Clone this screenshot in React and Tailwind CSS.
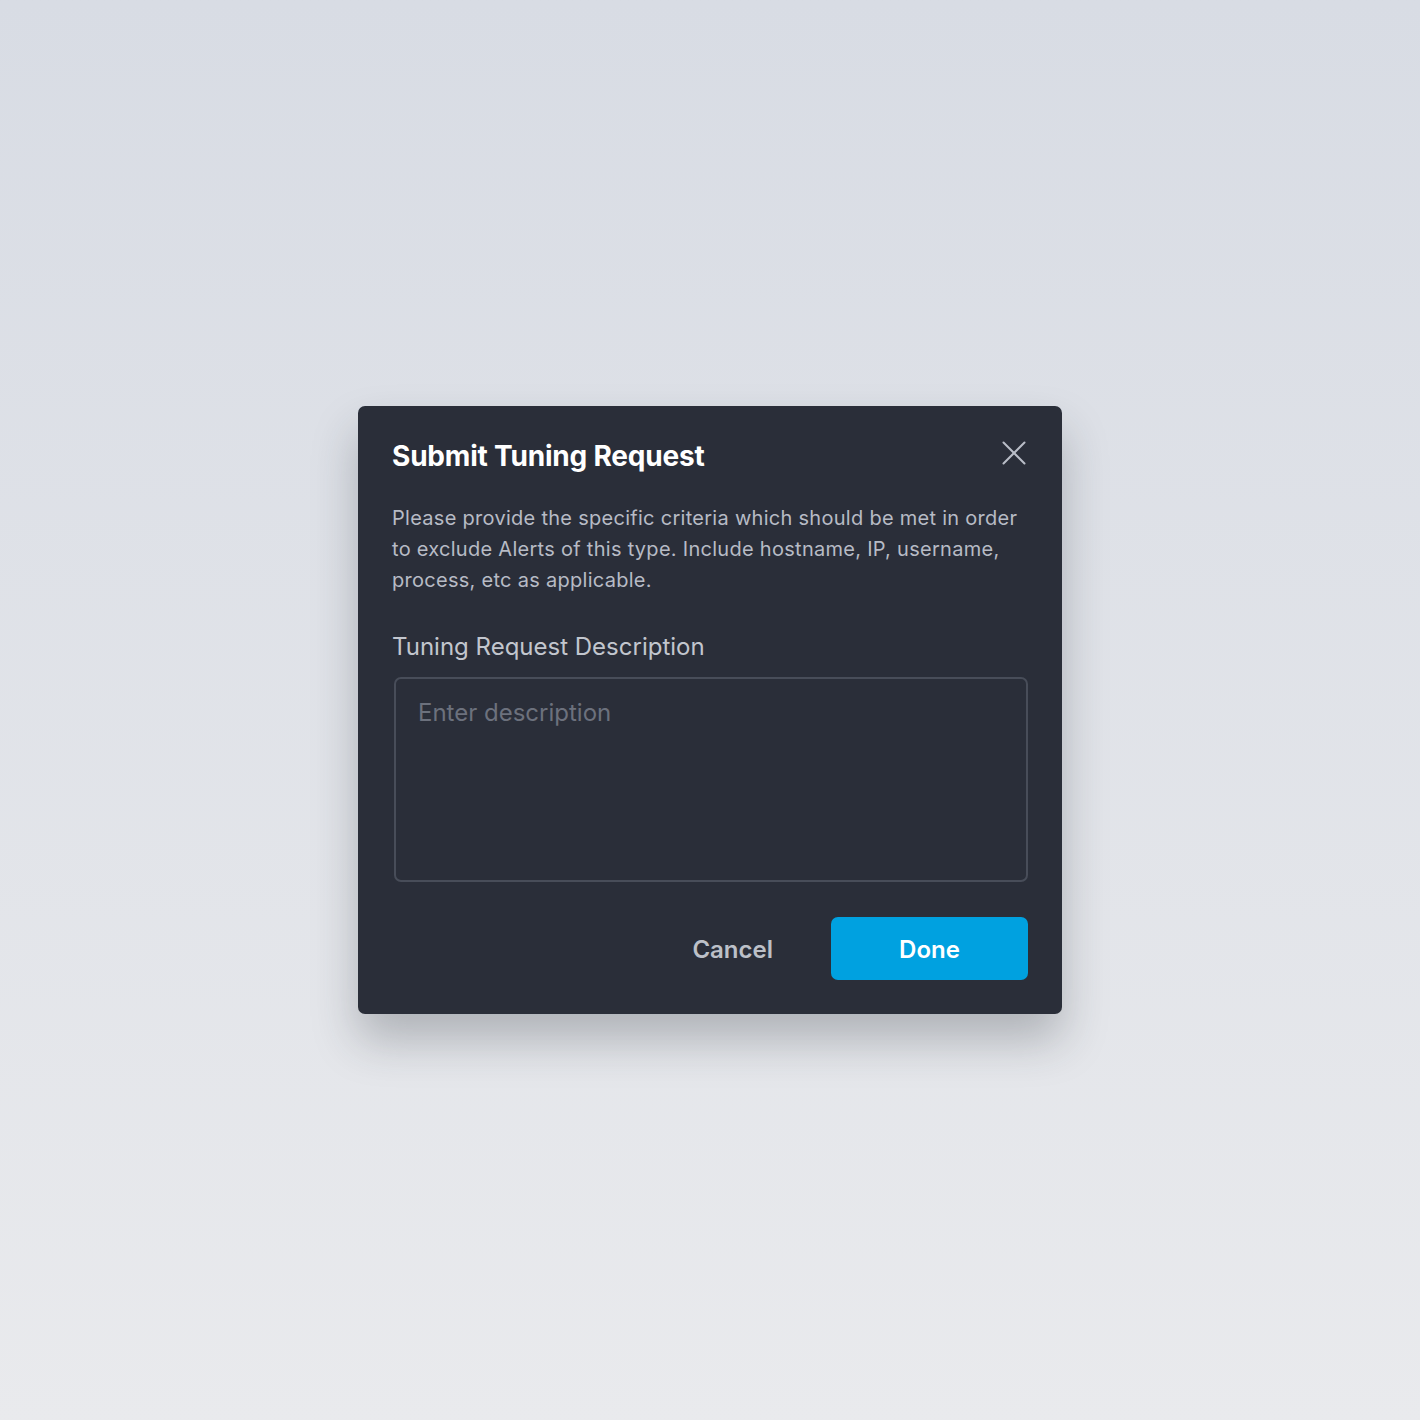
import React from 'react';

// ── Close icon ────────────────────────────────────────────────────────────────
const CloseIcon = () => (
  <svg width="24" height="24" viewBox="0 0 24 24" fill="none" stroke="#b9bdc7" strokeWidth="2" strokeLinecap="round">
    <line x1="1.5" y1="1.5" x2="22.5" y2="22.5" />
    <line x1="22.5" y1="1.5" x2="1.5" y2="22.5" />
  </svg>
);

// ── Tuning request modal ──────────────────────────────────────────────────────
const TuningModal = () => (
  <div
    className="w-[704px] rounded-[7px] bg-[#2a2e39] px-[34px] pt-[32px] pb-[34px] shadow-[0_26px_46px_rgba(40,45,55,0.28)]"
    style={{ fontFamily: 'Inter, "Noto Sans", sans-serif' }}
  >
    <div className="flex items-center justify-between">
      <h2 className="text-[28px] leading-[36px] font-bold text-white tracking-[-0.2px]">Submit Tuning Request</h2>
      <button className="mr-[2px] -mt-[6px]">
        <CloseIcon />
      </button>
    </div>

    <p className="mt-[29px] text-[20px] leading-[31px] tracking-[0.28px] text-[#b7bbc5]">
      Please provide the specific criteria which should be met in order to exclude Alerts of this type. Include
      hostname, IP, username, process, etc as applicable.
    </p>

    <label className="mt-[35px] block text-[24px] leading-[32px] text-[#c2c6ce]">Tuning Request Description</label>

    <textarea
      placeholder="Enter description"
      className="mt-[14px] ml-[2px] block h-[205px] w-[634px] resize-none rounded-[7px] border-2 border-[#484d59] bg-[#2a2e39] px-[22px] pt-[18px] text-[24px] leading-[32px] text-white placeholder:text-[#6c717d] outline-none"
    />

    <div className="mt-[35px] flex items-center justify-end gap-[58px]">
      <button className="pt-[3px] text-[24px] font-semibold text-[#bcc0c8]">Cancel</button>
      <button className="h-[63px] w-[197px] rounded-[7px] bg-[#00a1e0] pt-[3px] text-[24px] font-semibold text-white">
        Done
      </button>
    </div>
  </div>
);

export default function App() {
  return (
    <div className="flex h-[1420px] w-full items-center justify-center bg-gradient-to-b from-[#d8dce4] to-[#e9eaed]">
      <TuningModal />
    </div>
  );
}
